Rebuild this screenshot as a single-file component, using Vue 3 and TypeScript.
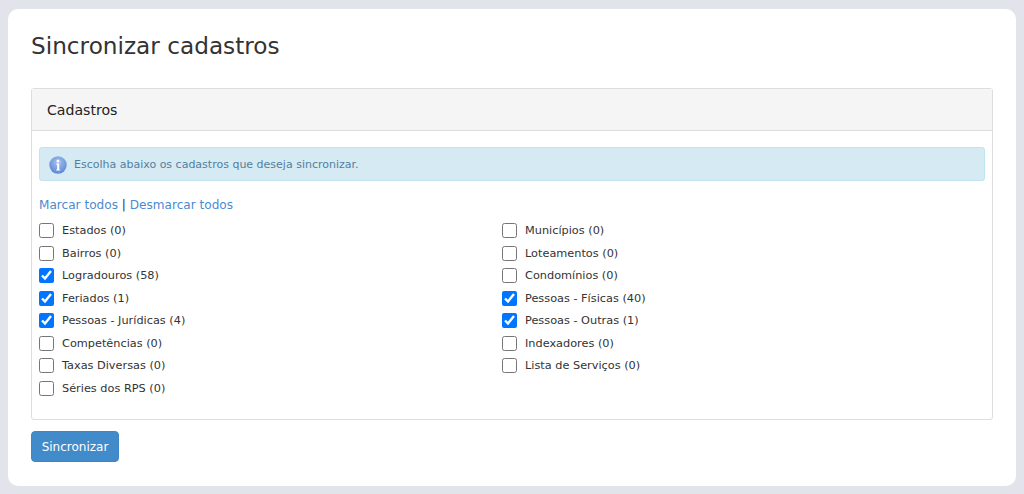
<script setup lang="ts">
import { ref } from 'vue'

interface Cadastro {
  label: string
  checked: boolean
}

const esquerda = ref<Cadastro[]>([
  { label: 'Estados (0)', checked: false },
  { label: 'Bairros (0)', checked: false },
  { label: 'Logradouros (58)', checked: true },
  { label: 'Feriados (1)', checked: true },
  { label: 'Pessoas - Jurídicas (4)', checked: true },
  { label: 'Competências (0)', checked: false },
  { label: 'Taxas Diversas (0)', checked: false },
  { label: 'Séries dos RPS (0)', checked: false },
])

const direita = ref<Cadastro[]>([
  { label: 'Municípios (0)', checked: false },
  { label: 'Loteamentos (0)', checked: false },
  { label: 'Condomínios (0)', checked: false },
  { label: 'Pessoas - Físicas (40)', checked: true },
  { label: 'Pessoas - Outras (1)', checked: true },
  { label: 'Indexadores (0)', checked: false },
  { label: 'Lista de Serviços (0)', checked: false },
])

const colunas = [esquerda, direita]

const marcar = (valor: boolean) => {
  colunas.forEach((coluna) => coluna.value.forEach((item) => (item.checked = valor)))
}
</script>

<template>
  <main class="page">
    <section class="card">
      <h1 class="title">Sincronizar cadastros</h1>

      <div class="panel">
        <div class="panel-heading">Cadastros</div>
        <div class="panel-body">
          <div class="alert">
            <svg class="alert-icon" width="18" height="18" viewBox="0 0 18 18">
              <defs>
                <radialGradient id="info-bg" cx="50%" cy="35%" r="65%">
                  <stop offset="0%" stop-color="#a9c3ee" />
                  <stop offset="100%" stop-color="#5b86d6" />
                </radialGradient>
              </defs>
              <circle cx="9" cy="9" r="8.7" fill="url(#info-bg)" />
              <circle cx="9" cy="4.9" r="1.5" fill="#fff" />
              <path d="M7.2 7.4h3v6h1v1.2H7.2v-1.2h1v-4.8h-1z" fill="#fff" />
            </svg>
            <span>Escolha abaixo os cadastros que deseja sincronizar.</span>
          </div>

          <p class="links">
            <a href="#" @click.prevent="marcar(true)">Marcar todos</a>
            <span class="sep"> | </span>
            <a href="#" @click.prevent="marcar(false)">Desmarcar todos</a>
          </p>

          <div class="grid">
            <div v-for="(coluna, i) in colunas" :key="i" class="coluna">
              <label v-for="item in coluna.value" :key="item.label" class="check">
                <input v-model="item.checked" type="checkbox" />
                <span>{{ item.label }}</span>
              </label>
            </div>
          </div>
        </div>
      </div>

      <button type="button" class="btn">Sincronizar</button>
    </section>
  </main>
</template>

<style>
html,
body {
  margin: 0;
  background: #e1e4ea;
}
</style>

<style scoped>
.page {
  box-sizing: border-box;
  height: 494px;
  padding: 9px 8px 8px;
  overflow: hidden;
  font-family: 'DejaVu Sans', Verdana, sans-serif;
  color: #333;
}

.card {
  box-sizing: border-box;
  height: 477px;
  padding: 23px 23px 0;
  background: #fff;
  border-radius: 10px;
}

.title {
  margin: 0;
  font-size: 23.2px;
  font-weight: 400;
  line-height: 28px;
  color: #333;
}

.panel {
  margin-top: 28px;
  background: #fff;
  border: 1px solid #ddd;
  border-radius: 3px;
}

.panel-heading {
  box-sizing: border-box;
  height: 42px;
  padding-left: 15px;
  font-size: 14.1px;
  line-height: 42px;
  color: #222;
  background: #f5f5f5;
  border-bottom: 1px solid #ddd;
}

.panel-body {
  box-sizing: border-box;
  height: 288px;
  padding: 16px 7px 0;
}

.alert {
  box-sizing: border-box;
  display: flex;
  gap: 7px;
  align-items: center;
  height: 34px;
  padding-left: 9px;
  font-size: 11px;
  color: #53809c;
  background: #d6eaf4;
  border: 1px solid #bfe3ef;
  border-radius: 3px;
}

.alert-icon {
  flex: none;
  margin-top: 2px;
}

.links {
  margin: 16px 0 0;
  font-size: 12.1px;
  line-height: 17px;
  color: #333;
}

.links a {
  color: #4a8bd0;
  text-decoration: none;
}

.sep {
  white-space: pre;
}

.grid {
  display: grid;
  grid-template-columns: 463px 1fr;
  margin-top: 5.4px;
}

.coluna {
  display: flex;
  flex-direction: column;
}

.check {
  display: flex;
  gap: 8px;
  align-items: center;
  height: 22.5px;
  font-size: 11.3px;
  color: #333;
}

.check input {
  flex: none;
  width: 15px;
  height: 15px;
  margin: 0;
}

.btn {
  display: block;
  width: 88px;
  height: 31px;
  padding: 0;
  margin-top: 11px;
  font-family: inherit;
  font-size: 12px;
  color: #fff;
  background: #428bca;
  border: 1px solid #3f86c4;
  border-radius: 4px;
}
</style>
